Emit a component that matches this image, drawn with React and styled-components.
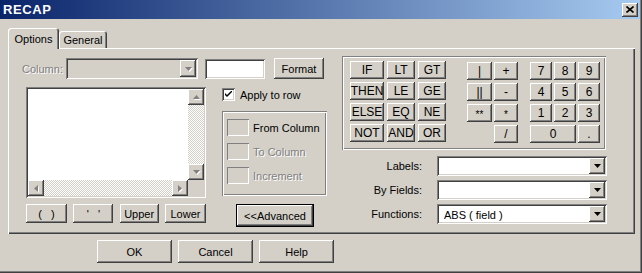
import React from 'react';
import styled, { createGlobalStyle, css } from 'styled-components';

const face = '#d4d0c8';

const GlobalStyle = createGlobalStyle`
  html, body { margin: 0; padding: 0; background: ${face}; }
  body {
    font-family: "Liberation Sans", Arial, sans-serif;
    font-size: 11px;
    color: #000;
  }
  * { box-sizing: border-box; }
`;

const raised = css`
  box-shadow: inset -1px -1px #404040, inset 1px 1px #fff,
    inset -2px -2px #808080, inset 2px 2px ${face};
`;

const sunken = css`
  box-shadow: inset 1px 1px #808080, inset -1px -1px #fff,
    inset 2px 2px #404040, inset -2px -2px ${face};
`;

const etched = css`
  box-shadow: inset 1px 1px #808080, inset -1px -1px #fff,
    inset 2px 2px #fff, inset -2px -2px #808080;
`;

const disabledText = css`
  color: #808080;
  text-shadow: 1px 1px #fff;
`;

const checker = css`
  background: repeating-conic-gradient(${face} 0 25%, #fff 0 50%) 0 0 / 2px 2px;
`;

const Window = styled.div`
  width: 642px;
  height: 273px;
  background: ${face};
  padding: 0 2px 2px 0;
  box-shadow: inset -1px -1px #404040, inset -2px -2px #808080;
  display: flex;
  flex-direction: column;
`;

const TitleBar = styled.div`
  height: 19px;
  flex-shrink: 0;
  display: flex;
  align-items: center;
  justify-content: space-between;
  padding: 0 2px 0 3px;
  background: linear-gradient(to right, #0a246a, #a6caf0);
`;

const Title = styled.span`
  color: #fff;
  font-weight: bold;
  font-size: 13px;
  letter-spacing: 0.6px;
`;

const CloseButton = styled.div`
  width: 16px;
  height: 14px;
  background: ${face};
  ${raised};
  display: flex;
  align-items: center;
  justify-content: center;
`;

const Body = styled.div`
  padding-left: 8px;
`;

const TabStrip = styled.div`
  display: flex;
  align-items: flex-end;
  height: 29px;
`;

const Tab = styled.div`
  position: relative;
  z-index: 1;
  width: ${p => p.$w}px;
  height: ${p => (p.$active ? 21 : 17)}px;
  margin-bottom: ${p => (p.$active ? -1 : 0)}px;
  border-radius: 3px 3px 0 0;
  background: ${face};
  box-shadow: inset 1px 1px #fff, inset -1px 0 #404040, inset -2px 0 #808080;
  display: flex;
  align-items: center;
  justify-content: center;
  padding-top: ${p => (p.$active ? 0 : 1)}px;
`;

const Panel = styled.div`
  width: 627px;
  height: 186px;
  padding: 8px 0 0 14px;
  box-shadow: inset 1px 1px #fff, inset -1px -1px #404040, inset -2px -2px #808080;
  display: flex;
`;

const LeftCol = styled.div`
  width: 305px;
  margin-top: 2px;
  display: flex;
  flex-direction: column;
`;

const TopRow = styled.div`
  display: flex;
  align-items: center;
  height: 21px;
`;

const Label = styled.span`
  width: ${p => (p.$w ? `${p.$w}px` : 'auto')};
  text-align: ${p => p.$align || 'left'};
  white-space: nowrap;
  ${p => p.$disabled && disabledText};
`;

const ComboBox = styled.div`
  width: ${p => p.$w}px;
  height: ${p => p.$h}px;
  margin-left: ${p => p.$ml || 0}px;
  padding: 2px;
  background: ${p => (p.$disabled ? face : '#fff')};
  ${sunken};
  display: flex;
`;

const ComboText = styled.div`
  flex: 1;
  padding-left: 5px;
  display: flex;
  align-items: center;
  padding-top: 1px;
`;

const DropButton = styled.div`
  width: 16px;
  background: ${face};
  ${raised};
  display: flex;
  align-items: center;
  justify-content: center;
`;

const TextInput = styled.div`
  width: 60px;
  height: 20px;
  margin-left: 7px;
  background: #fff;
  ${sunken};
`;

const Button = styled.div`
  width: ${p => p.$w}px;
  height: ${p => p.$h || 19}px;
  margin-left: ${p => p.$ml || 0}px;
  background: ${face};
  ${raised};
  display: flex;
  align-items: center;
  justify-content: center;
  white-space: nowrap;
`;

const DefaultButton = styled(Button)`
  border: 1px solid #000;
  box-shadow: inset -1px -1px #404040, inset 1px 1px #fff,
    inset -2px -2px #808080;
`;

const KeyButton = styled.div`
  height: 18px;
  background: ${face};
  ${raised};
  display: flex;
  align-items: center;
  justify-content: center;
  font-size: ${p => p.$fs || 12}px;
  padding-top: ${p => (p.$small ? 3 : 0)}px;
  ${p => p.$span && css`grid-column: span ${p.$span};`}
  ${p => p.$col && css`grid-column-start: ${p.$col};`}
`;

const MiddleRow = styled.div`
  display: flex;
  margin-top: 8px;
`;

const ListCol = styled.div`
  width: 180px;
  margin-left: 4px;
  display: flex;
  flex-direction: column;
`;

const ListBox = styled.div`
  height: 111px;
  padding: 2px;
  background: #fff;
  ${sunken};
  display: grid;
  grid-template-columns: 1fr 16px;
  grid-template-rows: 1fr 16px;
`;

const ScrollBar = styled.div`
  display: flex;
  flex-direction: ${p => (p.$vertical ? 'column' : 'row')};
  grid-column: ${p => (p.$vertical ? 2 : 1)};
  grid-row: ${p => (p.$vertical ? 1 : 2)};
`;

const ScrollTrack = styled.div`
  flex: 1;
  ${checker};
`;

const ScrollButton = styled.div`
  width: 16px;
  height: 16px;
  background: ${face};
  ${raised};
  display: flex;
  align-items: center;
  justify-content: center;
`;

const Corner = styled.div`
  grid-column: 2;
  grid-row: 2;
  background: ${face};
`;

const ListButtons = styled.div`
  display: flex;
  justify-content: space-between;
  margin-top: 6px;
`;

const OptCol = styled.div`
  width: 105px;
  margin-left: 16px;
  display: flex;
  flex-direction: column;
`;

const CheckRow = styled.div`
  display: flex;
  align-items: center;
  height: 13px;
  margin-top: 1px;
  gap: 5px;
`;

const CheckBox = styled.div`
  width: 13px;
  height: 13px;
  background: #fff;
  ${sunken};
  display: flex;
  align-items: center;
  justify-content: center;
`;

const GroupBox = styled.div`
  width: ${p => p.$w}px;
  height: ${p => p.$h}px;
  ${etched};
`;

const FromGroup = styled(GroupBox)`
  margin-top: 10px;
  padding: 8px 0 0 5px;
  display: flex;
  flex-direction: column;
  gap: 7px;
`;

const GroupItem = styled.div`
  display: flex;
  align-items: center;
  height: 17px;
  gap: 4px;
`;

const EmptyBox = styled.div`
  width: 22px;
  height: 17px;
  box-shadow: inset 1px 1px #808080, inset -1px -1px #fff;
`;

const AdvancedWrap = styled.div`
  margin: 8px 0 0 14px;
`;

const RightCol = styled.div`
  width: 266px;
  margin-left: 15px;
  display: flex;
  flex-direction: column;
`;

const CalcGroup = styled(GroupBox)`
  padding: 5px 0 0 8px;
  display: flex;
  align-items: flex-start;
`;

const KeyGrid = styled.div`
  display: grid;
  grid-template-columns: ${p => p.$cols};
  grid-auto-rows: 18px;
  column-gap: ${p => p.$gap}px;
  row-gap: 3px;
  margin-left: ${p => p.$ml || 0}px;
  margin-top: ${p => p.$mt || 0}px;
`;

const Fields = styled.div`
  margin-top: 6px;
  display: flex;
  flex-direction: column;
  gap: 4px;
`;

const FieldRow = styled.div`
  display: flex;
  align-items: center;
  height: 20px;
`;

const Footer = styled.div`
  display: flex;
  gap: 6px;
  margin: 6px 0 0 89px;
`;

const Arrow = ({ dir = 'down', disabled }) => {
  const pts = {
    down: '0,0 7,0 3.5,4',
    up: '0,4 7,4 3.5,0',
    left: '4,0 4,7 0,3.5',
    right: '0,0 0,7 4,3.5',
  }[dir];
  const vertical = dir === 'up' || dir === 'down';
  return (
    <svg width={vertical ? 7 : 4} height={vertical ? 4 : 7} viewBox={vertical ? '0 0 7 4' : '0 0 4 7'} overflow="visible">
      {disabled && <polygon points={pts} fill="#fff" transform="translate(1 1)" />}
      <polygon points={pts} fill={disabled ? '#808080' : '#000'} />
    </svg>
  );
};

const Combo = ({ w, h = 20, ml, disabled, children }) => (
  <ComboBox $w={w} $h={h} $ml={ml} $disabled={disabled}>
    <ComboText>{children}</ComboText>
    <DropButton>
      <Arrow disabled={disabled} />
    </DropButton>
  </ComboBox>
);

const logicKeys = ['IF', 'LT', 'GT', 'THEN', 'LE', 'GE', 'ELSE', 'EQ', 'NE', 'NOT', 'AND', 'OR'];
const numKeys = ['7', '8', '9', '4', '5', '6', '1', '2', '3'];

export default function App() {
  return (
    <>
      <GlobalStyle />
      <Window>
        <TitleBar>
          <Title>RECAP</Title>
          <CloseButton>
            <svg width="8" height="7" viewBox="0 0 8 7">
              <path d="M0.5 0.5 L7.5 6.5 M7.5 0.5 L0.5 6.5" stroke="#000" strokeWidth="1.6" />
            </svg>
          </CloseButton>
        </TitleBar>
        <Body>
          <TabStrip>
            <Tab $active $w={51}>Options</Tab>
            <Tab $w={48}>General</Tab>
          </TabStrip>
          <Panel>
            <LeftCol>
              <TopRow>
                <Label $w={44} $disabled>Column:</Label>
                <Combo w={132} h={21} disabled />
                <TextInput />
                <Button $w={50} $h={21} $ml={9}>Format</Button>
              </TopRow>
              <MiddleRow>
                <ListCol>
                  <ListBox>
                    <ScrollBar $vertical>
                      <ScrollButton><Arrow dir="up" disabled /></ScrollButton>
                      <ScrollTrack />
                      <ScrollButton><Arrow dir="down" disabled /></ScrollButton>
                    </ScrollBar>
                    <ScrollBar>
                      <ScrollButton><Arrow dir="left" disabled /></ScrollButton>
                      <ScrollTrack />
                      <ScrollButton><Arrow dir="right" disabled /></ScrollButton>
                    </ScrollBar>
                    <Corner />
                  </ListBox>
                  <ListButtons>
                    <Button $w={41}>(&nbsp;&nbsp;&nbsp;)</Button>
                    <Button $w={40}>'&nbsp;&nbsp;&nbsp;'</Button>
                    <Button $w={39}>Upper</Button>
                    <Button $w={41}>Lower</Button>
                  </ListButtons>
                </ListCol>
                <OptCol>
                  <CheckRow>
                    <CheckBox>
                      <svg width="7" height="7" viewBox="0 0 7 7">
                        <path d="M0 2 L0 4 L2 6 L7 1 L7 -1 L2 4 Z" fill="#000" />
                      </svg>
                    </CheckBox>
                    <Label>Apply to row</Label>
                  </CheckRow>
                  <FromGroup $w={105} $h={85}>
                    <GroupItem><EmptyBox /><Label>From Column</Label></GroupItem>
                    <GroupItem><EmptyBox /><Label $disabled>To Column</Label></GroupItem>
                    <GroupItem><EmptyBox /><Label $disabled>Increment</Label></GroupItem>
                  </FromGroup>
                  <AdvancedWrap>
                    <DefaultButton $w={78} $h={23}>&lt;&lt;Advanced</DefaultButton>
                  </AdvancedWrap>
                </OptCol>
              </MiddleRow>
            </LeftCol>
            <RightCol>
              <CalcGroup $w={264} $h={94}>
                <KeyGrid $cols="34px 28px 28px" $gap={3}>
                  {logicKeys.map(k => (
                    <KeyButton key={k}>{k}</KeyButton>
                  ))}
                </KeyGrid>
                <KeyGrid $cols="25px 24px" $gap={2} $ml={21} $mt={1}>
                  <KeyButton>|</KeyButton>
                  <KeyButton>+</KeyButton>
                  <KeyButton>||</KeyButton>
                  <KeyButton>-</KeyButton>
                  <KeyButton $fs={10} $small>**</KeyButton>
                  <KeyButton $fs={10} $small>*</KeyButton>
                  <KeyButton $col={2}>/</KeyButton>
                </KeyGrid>
                <KeyGrid $cols="22px 22px 22px" $gap={2} $ml={12} $mt={1}>
                  {numKeys.map(k => (
                    <KeyButton key={k}>{k}</KeyButton>
                  ))}
                  <KeyButton $span={2}>0</KeyButton>
                  <KeyButton>.</KeyButton>
                </KeyGrid>
              </CalcGroup>
              <Fields>
                <FieldRow>
                  <Label $w={80} $align="right">Labels:</Label>
                  <Combo w={170} ml={15} />
                </FieldRow>
                <FieldRow>
                  <Label $w={80} $align="right">By Fields:</Label>
                  <Combo w={170} ml={15} />
                </FieldRow>
                <FieldRow>
                  <Label $w={80} $align="right">Functions:</Label>
                  <Combo w={170} ml={15}>ABS ( field )</Combo>
                </FieldRow>
              </Fields>
            </RightCol>
          </Panel>
          <Footer>
            <Button $w={75} $h={23}>OK</Button>
            <Button $w={75} $h={23}>Cancel</Button>
            <Button $w={75} $h={23}>Help</Button>
          </Footer>
        </Body>
      </Window>
    </>
  );
}
